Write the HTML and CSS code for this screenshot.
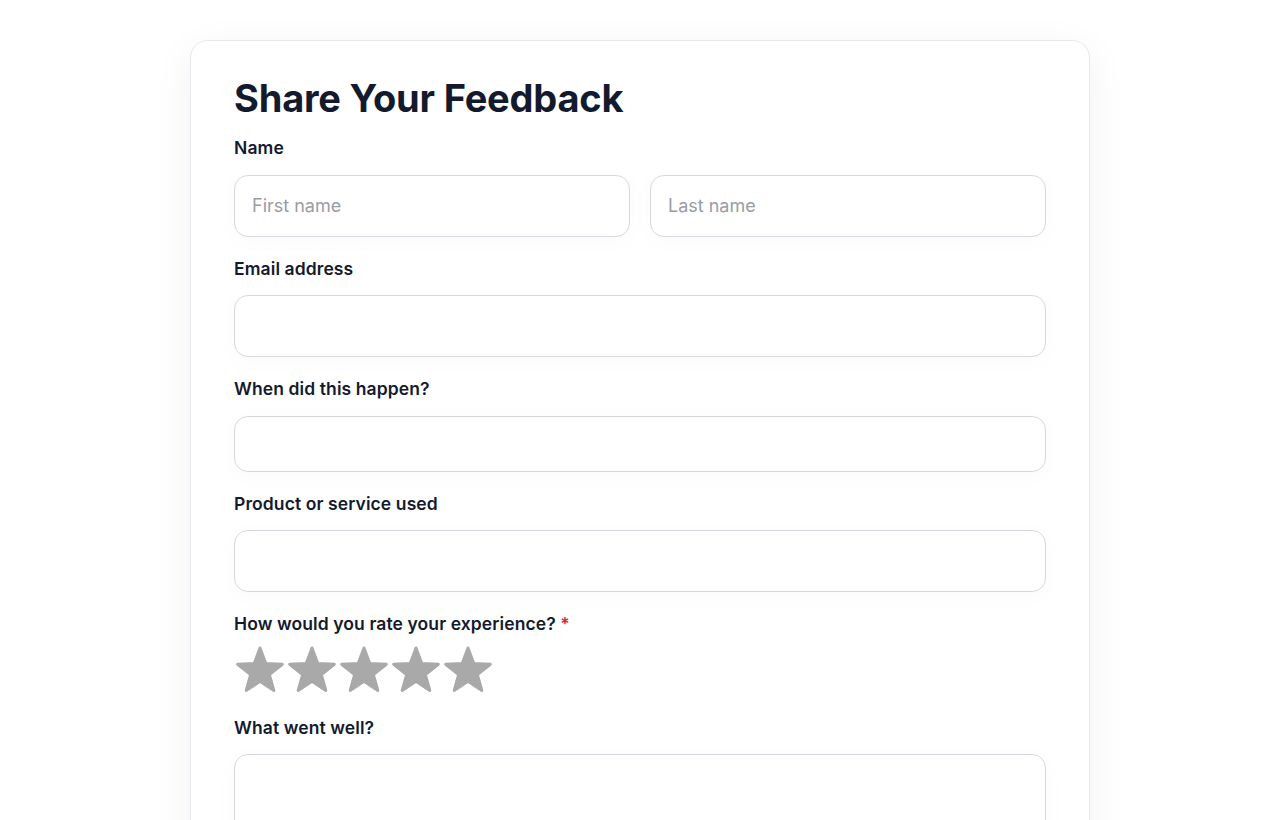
FILE: index.html
```html
<!DOCTYPE html>
<html lang="en">
<head>
    <meta charset="UTF-8">
    <meta name="viewport" content="width=device-width, initial-scale=1.0">
    <title>Share Your Feedback</title>
    <link rel="stylesheet" href="styles.css">
</head>
<body>
    <div class="card">
        <h1 class="title">Share Your Feedback</h1>

        <div class="field">
            <label class="label">Name</label>
            <div class="row">
                <input class="input" type="text" placeholder="First name">
                <input class="input" type="text" placeholder="Last name">
            </div>
        </div>

        <div class="field">
            <label class="label">Email address</label>
            <input class="input" type="email">
        </div>

        <div class="field">
            <label class="label">When did this happen?</label>
            <input class="input input-date" type="text">
        </div>

        <div class="field">
            <label class="label">Product or service used</label>
            <input class="input" type="text">
        </div>

        <div class="field">
            <label class="label">How would you rate your experience? <span class="required">*</span></label>
            <div class="stars">
                <svg class="star" viewBox="0 0 52 50"><path d="M26 4 L31.8 19.52 L48.35 20.24 L35.39 30.55 L39.81 46.51 L26 37.37 L12.19 46.51 L16.61 30.55 L3.65 20.24 L20.2 19.52 Z"/></svg>
                <svg class="star" viewBox="0 0 52 50"><path d="M26 4 L31.8 19.52 L48.35 20.24 L35.39 30.55 L39.81 46.51 L26 37.37 L12.19 46.51 L16.61 30.55 L3.65 20.24 L20.2 19.52 Z"/></svg>
                <svg class="star" viewBox="0 0 52 50"><path d="M26 4 L31.8 19.52 L48.35 20.24 L35.39 30.55 L39.81 46.51 L26 37.37 L12.19 46.51 L16.61 30.55 L3.65 20.24 L20.2 19.52 Z"/></svg>
                <svg class="star" viewBox="0 0 52 50"><path d="M26 4 L31.8 19.52 L48.35 20.24 L35.39 30.55 L39.81 46.51 L26 37.37 L12.19 46.51 L16.61 30.55 L3.65 20.24 L20.2 19.52 Z"/></svg>
                <svg class="star" viewBox="0 0 52 50"><path d="M26 4 L31.8 19.52 L48.35 20.24 L35.39 30.55 L39.81 46.51 L26 37.37 L12.19 46.51 L16.61 30.55 L3.65 20.24 L20.2 19.52 Z"/></svg>
            </div>
        </div>

        <div class="field">
            <label class="label">What went well?</label>
            <textarea class="input textarea"></textarea>
        </div>
    </div>
</body>
</html>
```

FILE: styles.css
```css
body {
    margin: 0;
    background-color: #ffffff;
    color: #111827;
    font-family: Inter, "Noto Sans", sans-serif;
}
.card {
    width: 900px;
    box-sizing: border-box;
    margin: 40px auto;
    padding: 30px 43px 44px;
    background-color: #ffffff;
    border: 1px solid #e8e9ee;
    border-radius: 18px;
    box-shadow: 0 10px 40px rgba(17, 24, 39, 0.06);
}
.title {
    margin: 0 0 11px;
    font-size: 38px;
    line-height: 54px;
    font-weight: 700;
    color: #141a2e;
    letter-spacing: -0.2px;
}
.field {
    display: flex;
    flex-direction: column;
    margin-bottom: 20px;
}
.label {
    font-size: 17.5px;
    line-height: 24px;
    font-weight: 600;
    color: #141a2e;
    letter-spacing: 0.1px;
    margin-bottom: 14.5px;
}
.required {
    color: #e0263f;
}
.row {
    display: flex;
    gap: 20px;
}
.row .input {
    flex: 1;
    min-width: 0;
}
.input {
    box-sizing: border-box;
    height: 62px;
    padding: 0 17px;
    font-family: Inter, "Noto Sans", sans-serif;
    font-size: 18px;
    color: #111827;
    background-color: #ffffff;
    border: 1px solid #d6d8de;
    border-radius: 14px;
    box-shadow: 0 4px 24px rgba(17, 24, 39, 0.025);
    outline: none;
}
.input::placeholder {
    color: #9a9ca3;
}
.input-date {
    height: 56px;
}
.textarea {
    height: 140px;
    padding: 16px 17px;
    resize: none;
}
.stars {
    display: flex;
    margin-top: -7px;
    margin-bottom: 2px;
}
.star {
    width: 52px;
    height: 50px;
    fill: #a9a9a9;
    stroke: #a9a9a9;
    stroke-width: 3;
    stroke-linejoin: round;
}
```
